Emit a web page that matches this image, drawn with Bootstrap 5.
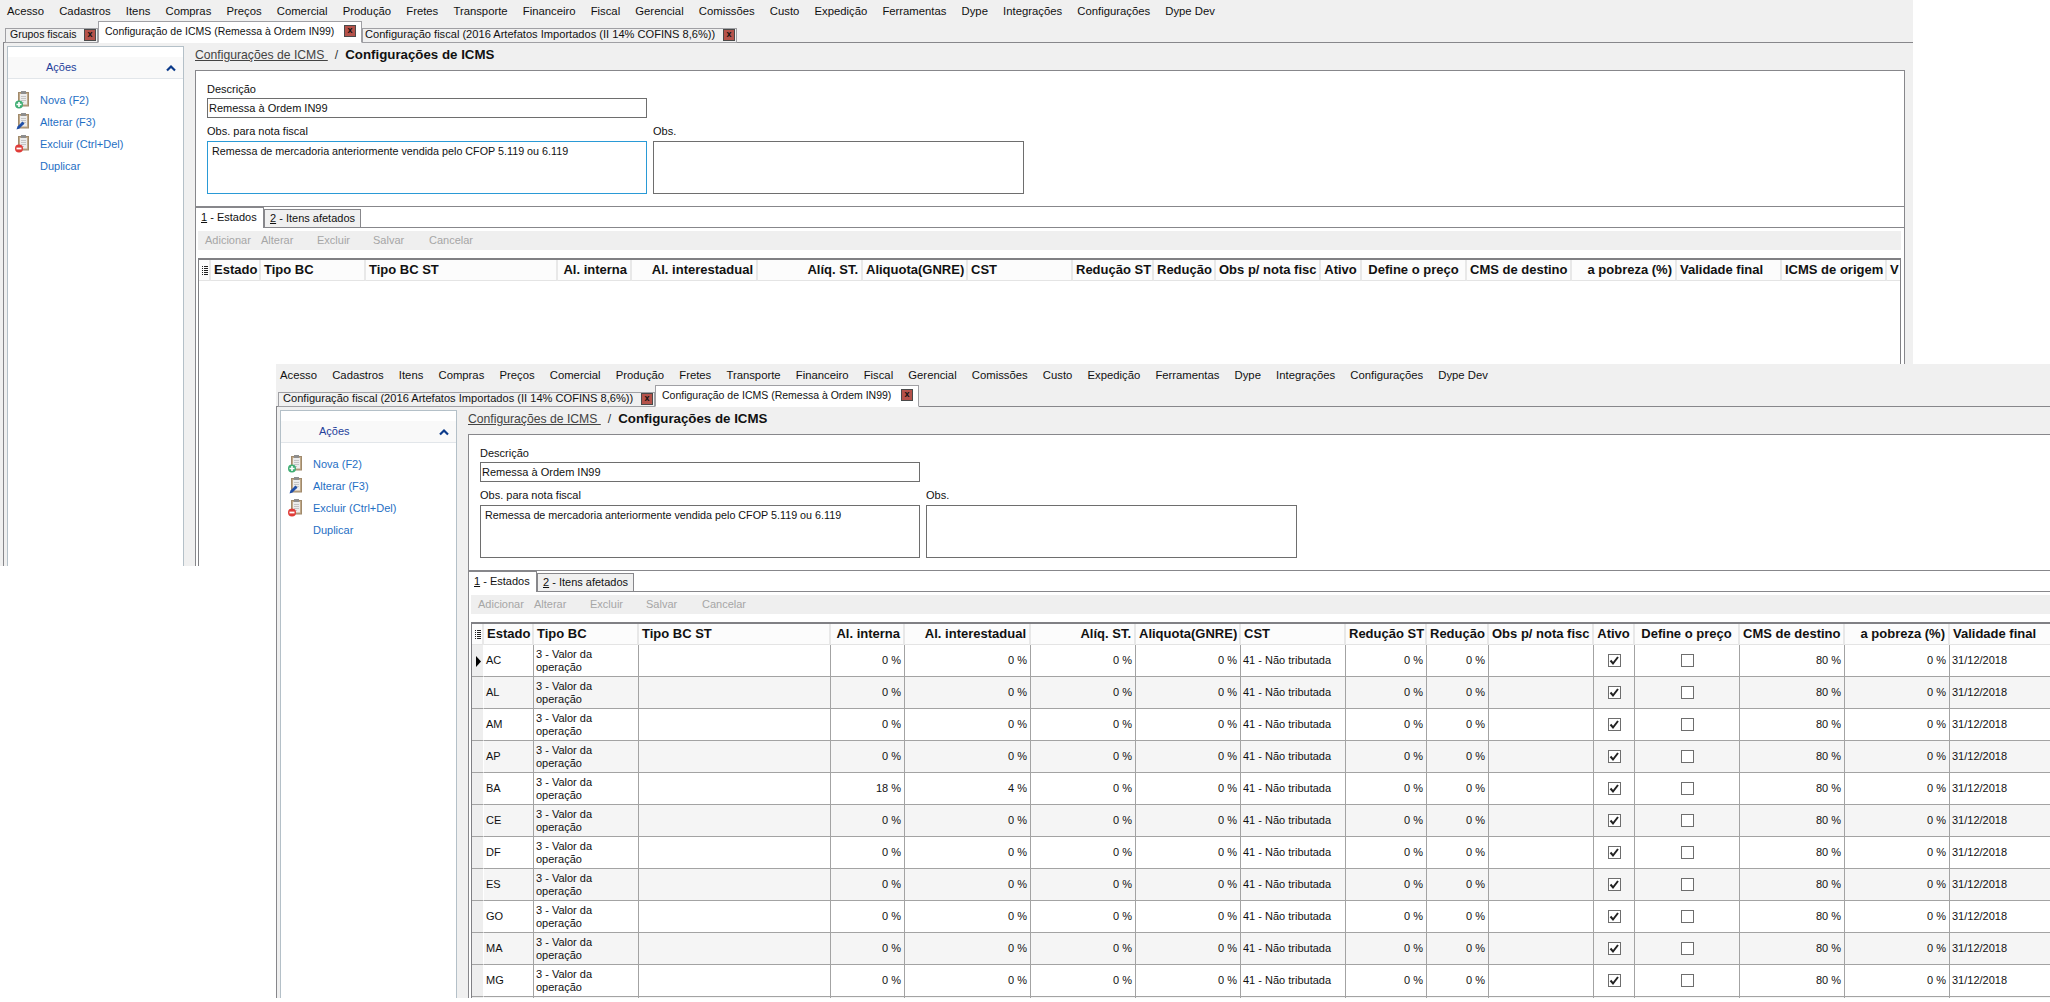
<!DOCTYPE html>
<html lang="pt-BR">
<head>
<meta charset="utf-8">
<title>Configurações de ICMS</title>
<link href="https://cdn.jsdelivr.net/npm/bootstrap@5.3.0/dist/css/bootstrap.min.css" rel="stylesheet">
<style>
body{margin:0;background:#fff;font:11px/13px "Liberation Sans",Arial,sans-serif;color:#111;overflow:hidden;height:1002px;--line:#87878b}
.appwin{position:absolute;background:#f0f0f0;overflow:hidden;display:flex;flex-direction:column}
.win-top{left:0;top:0;width:1913px;height:566px;padding-left:3px}
.win-low{left:276px;top:364px;width:1774px;height:634px}
.menubar{height:22px;flex:none;padding-left:4px;gap:15.15px;align-items:center;flex-wrap:nowrap}
.menubar .nav-link{padding:0;color:#111;font-size:11.3px;white-space:nowrap}
.tabstrip{height:21px;flex:none;padding-left:2px;border-bottom:1px solid var(--line);align-items:flex-end;flex-wrap:nowrap;position:relative}
.wintab{display:flex;align-items:center;height:15px;margin-bottom:-1px;padding:0 1px 2px 4px;border:1px solid #a0a0a4;border-top-color:#a0a0a4;background:#f0f0f0;color:#111;white-space:nowrap;justify-content:space-between;font-size:10.5px}
.wintab.is-on{height:22px;background:#fff;border-bottom-color:#fff;position:relative;padding:0 5px 2px 6px}
.wt-a{width:93px}.wt-b{width:264px}.wt-c{width:375px;font-size:11.1px}
.wt-b + .wt-c{padding-left:2px}
.win-low .wt-c{width:377px}
.closer{width:12px;height:12px;flex:none;background:#b5524a;border:1px solid #4a4a4a;font:700 9px/9px "Liberation Sans",sans-serif;text-align:center;color:#111}
.workbody{flex:1 1 auto;min-height:0;display:flex;border-left:1px solid var(--line)}
.sidepane{flex:none;width:177px;margin:3px 11px 0 3px;background:#fff;border:1px solid #b4c0c8;border-width:1px 1px 0 1px}
.sidehead{margin-top:10px;height:22px;background:#f9f9f9;border-bottom:1px solid #e2e6ea;padding:0 7px 0 38px;color:#24409a;align-items:center;justify-content:space-between;display:flex}
.sidelist{padding-top:10px}
.sidelist .list-group-item{height:22px;padding:0 0 0 7px;border:0;background:transparent;display:flex;align-items:center;color:#1f6fc4;gap:9px}
.sideico{width:16px;height:18px;flex:none}
.maincol{flex:none;width:1710px;display:flex;flex-direction:column}
.crumbs{height:27px;flex:none;margin:0;padding:5px 0 0;font-size:12.2px;line-height:14px;--bs-breadcrumb-margin-bottom:0;--bs-breadcrumb-item-padding-x:7px;--bs-breadcrumb-divider-color:#333;--bs-breadcrumb-item-active-color:#111;display:flex;flex-wrap:nowrap}
.crumbs a{color:#444;text-decoration:underline}
.crumbs b{font-size:13.3px;color:#111}
.formbox{height:137px;flex:none;background:#fff;border:1px solid var(--line);padding:12px 0 0 11px}
.fieldlab{display:block;margin:0;height:16px;line-height:13px}
.fieldlab-top{height:15px}
.fx{border:1px solid #6e6e6e;border-radius:0;padding:0 1px;font-size:11px;line-height:18px;height:20px;min-height:0;color:#111;box-shadow:none}
.fx-name{width:440px}
.fx-a{width:440px;height:53px;padding:3px 4px;line-height:13px;font-size:10.75px;border-color:#2a9ad6;resize:none}
.fx-plain{border-color:#6e6e6e}
.fx-b{width:371px;height:53px;resize:none}
.rowtwo{margin-top:7px;gap:6px;display:flex}
.tabctl{flex:1 1 auto;min-height:0;display:flex;flex-direction:column;background:#fff;border:1px solid var(--line);border-width:0 1px;margin-top:0}
.subtabs{height:21px;flex:none;border-bottom:1px solid var(--line);align-items:flex-end;flex-wrap:nowrap;padding-left:0}
.subtab{height:19px;width:97px;border:1px solid #87878b;background:#f0f0f0;padding:2px 0 0 5px;margin-bottom:-1px;color:#111;white-space:nowrap;margin-left:0}
.subtab.is-on{height:22px;width:68px;background:#fff;border:0;border-top:2px solid #87878b;border-right:1px solid #87878b;padding:3px 0 0 5px;border-bottom:0;position:relative}
.toolstrip{margin:3px 3px 0 2px;height:19px;flex:none;background:#efefef;display:flex;flex-wrap:nowrap}
.toolstrip .btn{width:56px;flex:none;border:0;border-radius:0;padding:0 0 0 7px;text-align:left;font-size:11px;line-height:19px;color:#a6a6a6;opacity:1;background:transparent}
.gridwrap{flex:1 1 auto;min-height:0;margin:8px 3px 0 2px;border:1px solid #808084;border-width:2px 1px 0 1px;overflow:hidden;background:#fff}
.gridtb{table-layout:fixed;width:1793px;margin:0;border-collapse:separate;border-spacing:0;color:#111;font-size:11px}
.win-low .gridtb{width:1583px}
.gridtb col:nth-child(1){width:12px}.gridtb col:nth-child(2){width:50px}.gridtb col:nth-child(3){width:105px}.gridtb col:nth-child(4){width:192px}.gridtb col:nth-child(5){width:74px}.gridtb col:nth-child(6){width:126px}.gridtb col:nth-child(10){width:81px}.gridtb col:nth-child(11){width:62px}.gridtb col:nth-child(13){width:41px}
.gridtb col{width:105px}
.gridtb>:not(caption)>*>*{padding:0 2px;border:0;border-right:1px solid #a3a3a3;border-bottom:1px solid #a3a3a3;height:32px;line-height:13px;vertical-align:middle;box-shadow:none;overflow:hidden;white-space:nowrap;background:transparent}
.gridtb>thead>tr>th{height:21px;font:700 13px/16px "Liberation Sans",sans-serif;background:#fcfcfc;border-right:2px solid #e8e8e8;border-bottom:1px solid #e4e4e4;padding:0 3px}
.gridtb>tbody>tr:nth-child(even)>td{background:#f5f5f5}
.gridtb>tbody>tr>td.rowmark{background:#eee;padding:0 0 0 4px;border-right:1px solid #fff;border-bottom:1px solid #a3a3a3}
.gridtb .ar{text-align:right;padding-right:3px}
.gridtb .ac{text-align:center}
.gridtb .form-check-input{width:13px;height:13px;margin:0;border:1px solid #6e6e6e;border-radius:0;background-color:#fff;vertical-align:middle;box-shadow:none}
.gridtb .form-check-input:checked{background-color:#fff;border-color:#6e6e6e;background-image:url("data:image/svg+xml,%3Csvg xmlns='http://www.w3.org/2000/svg' viewBox='0 0 13 13'%3E%3Cpath d='M2.5 6.5l2.5 3 5-6.5' fill='none' stroke='%23222' stroke-width='2'/%3E%3C/svg%3E");background-size:13px 13px}
.hide-sprite{display:none}
</style>
</head>
<body>
<svg class="hide-sprite" xmlns="http://www.w3.org/2000/svg">
<symbol id="clip" viewBox="0 0 16 18"><rect x="3.5" y="1.5" width="10" height="13.5" fill="#bfa888" stroke="#a08a6c"/><rect x="5" y="3" width="7" height="10.5" fill="#ececec"/><rect x="6" y="0" width="5" height="3" fill="#8e8e8e"/><path d="M6 5.5h5M6 7.5h5M6 9.5h5M6 11.5h3" stroke="#c4c4c4"/></symbol>
<symbol id="ic-add" viewBox="0 0 16 18"><use href="#clip"/><circle cx="4" cy="13.5" r="4" fill="#3fae74"/><path d="M4 11v5M1.5 13.5h5" stroke="#fff" stroke-width="1.6"/></symbol>
<symbol id="ic-edit" viewBox="0 0 16 18"><use href="#clip"/><path d="M1.5 16.5l1-3 5-5 2 2-5 5z" fill="#1f4fa8"/></symbol>
<symbol id="ic-del" viewBox="0 0 16 18"><use href="#clip"/><circle cx="4" cy="13.5" r="4" fill="#e03c38"/><path d="M1.5 13.5h5" stroke="#fff" stroke-width="1.8"/></symbol>
<symbol id="ic-up" viewBox="0 0 10 10"><path d="M1 7.5l4-4 4 4" fill="none" stroke="#0b3a8a" stroke-width="2.2"/></symbol>
<symbol id="ic-cols" viewBox="0 0 6 9"><path d="M0 .5h1M2 .5h4M0 2.5h1M2 2.5h4M0 4.5h1M2 4.5h4M0 6.5h1M2 6.5h4M0 8.5h1M2 8.5h4" stroke="#222"/></symbol>
<symbol id="ic-arrow" viewBox="0 0 5 11"><path d="M0 0l5 5.5-5 5.5z" fill="#000"/></symbol>
</svg>

<div class="appwin win-top">
  <nav class="nav menubar">
    <a class="nav-link" href="#">Acesso</a><a class="nav-link" href="#">Cadastros</a><a class="nav-link" href="#">Itens</a><a class="nav-link" href="#">Compras</a><a class="nav-link" href="#">Preços</a><a class="nav-link" href="#">Comercial</a><a class="nav-link" href="#">Produção</a><a class="nav-link" href="#">Fretes</a><a class="nav-link" href="#">Transporte</a><a class="nav-link" href="#">Financeiro</a><a class="nav-link" href="#">Fiscal</a><a class="nav-link" href="#">Gerencial</a><a class="nav-link" href="#">Comissões</a><a class="nav-link" href="#">Custo</a><a class="nav-link" href="#">Expedição</a><a class="nav-link" href="#">Ferramentas</a><a class="nav-link" href="#">Dype</a><a class="nav-link" href="#">Integrações</a><a class="nav-link" href="#">Configurações</a><a class="nav-link" href="#">Dype Dev</a>
  </nav>
  <div class="nav tabstrip">
    <div class="wintab wt-a"><span>Grupos fiscais</span><span class="closer">x</span></div>
    <div class="wintab wt-b is-on"><span>Configuração de ICMS (Remessa à Ordem IN99)</span><span class="closer">x</span></div>
    <div class="wintab wt-c"><span>Configuração fiscal (2016 Artefatos Importados (II 14% COFINS 8,6%))</span><span class="closer">x</span></div>
  </div>
  <div class="workbody">
    <aside class="sidepane">
      <div class="sidehead"><span>Ações</span><svg width="10" height="10"><use href="#ic-up"/></svg></div>
      <div class="list-group list-group-flush sidelist">
        <a class="list-group-item" href="#"><svg class="sideico"><use href="#ic-add"/></svg>Nova (F2)</a>
        <a class="list-group-item" href="#"><svg class="sideico"><use href="#ic-edit"/></svg>Alterar (F3)</a>
        <a class="list-group-item" href="#"><svg class="sideico"><use href="#ic-del"/></svg>Excluir (Ctrl+Del)</a>
        <a class="list-group-item" href="#"><span class="sideico"></span>Duplicar</a>
      </div>
    </aside>
    <main class="maincol">
      <ol class="breadcrumb crumbs"><li class="breadcrumb-item"><a href="#">Configurações de ICMS&nbsp;</a></li><li class="breadcrumb-item active"><b>Configurações de ICMS</b></li></ol>
      <div class="formbox">
        <label class="fieldlab fieldlab-top">Descrição</label>
        <input class="form-control fx fx-name" value="Remessa à Ordem IN99">
        <div class="rowtwo">
          <div><label class="fieldlab">Obs. para nota fiscal</label><textarea class="form-control fx fx-a">Remessa de mercadoria anteriormente vendida pelo CFOP 5.119 ou 6.119</textarea></div>
          <div><label class="fieldlab">Obs.</label><textarea class="form-control fx fx-b"></textarea></div>
        </div>
      </div>
      <div class="tabctl">
        <div class="nav subtabs">
          <div class="subtab is-on"><u>1</u> - Estados</div>
          <div class="subtab"><u>2</u> - Itens afetados</div>
        </div>
        <div class="toolstrip"><button class="btn" disabled>Adicionar</button><button class="btn" disabled>Alterar</button><button class="btn" disabled>Excluir</button><button class="btn" disabled>Salvar</button><button class="btn" disabled>Cancelar</button></div>
        <div class="gridwrap">
          <table class="table gridtb">
            <colgroup><col><col><col><col><col><col><col><col><col><col><col><col><col><col><col><col><col><col><col></colgroup>
            <thead><tr><th><svg width="6" height="9"><use href="#ic-cols"/></svg></th><th>Estado</th><th>Tipo BC</th><th>Tipo BC ST</th><th class="ar">Al. interna</th><th class="ar">Al. interestadual</th><th class="ar">Alíq. ST.</th><th class="ar">Aliquota(GNRE)</th><th>CST</th><th class="ar">Redução ST</th><th class="ar">Redução</th><th>Obs p/ nota fisc</th><th class="ac">Ativo</th><th class="ac">Define o preço</th><th class="ar">CMS de destino</th><th class="ar">a pobreza (%)</th><th>Validade final</th><th>ICMS de origem</th><th>V</th></tr></thead>
          </table>
        </div>
      </div>
    </main>
  </div>
</div>

<div class="appwin win-low">
  <nav class="nav menubar">
    <a class="nav-link" href="#">Acesso</a><a class="nav-link" href="#">Cadastros</a><a class="nav-link" href="#">Itens</a><a class="nav-link" href="#">Compras</a><a class="nav-link" href="#">Preços</a><a class="nav-link" href="#">Comercial</a><a class="nav-link" href="#">Produção</a><a class="nav-link" href="#">Fretes</a><a class="nav-link" href="#">Transporte</a><a class="nav-link" href="#">Financeiro</a><a class="nav-link" href="#">Fiscal</a><a class="nav-link" href="#">Gerencial</a><a class="nav-link" href="#">Comissões</a><a class="nav-link" href="#">Custo</a><a class="nav-link" href="#">Expedição</a><a class="nav-link" href="#">Ferramentas</a><a class="nav-link" href="#">Dype</a><a class="nav-link" href="#">Integrações</a><a class="nav-link" href="#">Configurações</a><a class="nav-link" href="#">Dype Dev</a>
  </nav>
  <div class="nav tabstrip">
    <div class="wintab wt-c"><span>Configuração fiscal (2016 Artefatos Importados (II 14% COFINS 8,6%))</span><span class="closer">x</span></div>
    <div class="wintab wt-b is-on"><span>Configuração de ICMS (Remessa à Ordem IN99)</span><span class="closer">x</span></div>
  </div>
  <div class="workbody">
    <aside class="sidepane">
      <div class="sidehead"><span>Ações</span><svg width="10" height="10"><use href="#ic-up"/></svg></div>
      <div class="list-group list-group-flush sidelist">
        <a class="list-group-item" href="#"><svg class="sideico"><use href="#ic-add"/></svg>Nova (F2)</a>
        <a class="list-group-item" href="#"><svg class="sideico"><use href="#ic-edit"/></svg>Alterar (F3)</a>
        <a class="list-group-item" href="#"><svg class="sideico"><use href="#ic-del"/></svg>Excluir (Ctrl+Del)</a>
        <a class="list-group-item" href="#"><span class="sideico"></span>Duplicar</a>
      </div>
    </aside>
    <main class="maincol">
      <ol class="breadcrumb crumbs"><li class="breadcrumb-item"><a href="#">Configurações de ICMS&nbsp;</a></li><li class="breadcrumb-item active"><b>Configurações de ICMS</b></li></ol>
      <div class="formbox">
        <label class="fieldlab fieldlab-top">Descrição</label>
        <input class="form-control fx fx-name" value="Remessa à Ordem IN99">
        <div class="rowtwo">
          <div><label class="fieldlab">Obs. para nota fiscal</label><textarea class="form-control fx fx-a fx-plain">Remessa de mercadoria anteriormente vendida pelo CFOP 5.119 ou 6.119</textarea></div>
          <div><label class="fieldlab">Obs.</label><textarea class="form-control fx fx-b"></textarea></div>
        </div>
      </div>
      <div class="tabctl">
        <div class="nav subtabs">
          <div class="subtab is-on"><u>1</u> - Estados</div>
          <div class="subtab"><u>2</u> - Itens afetados</div>
        </div>
        <div class="toolstrip"><button class="btn" disabled>Adicionar</button><button class="btn" disabled>Alterar</button><button class="btn" disabled>Excluir</button><button class="btn" disabled>Salvar</button><button class="btn" disabled>Cancelar</button></div>
        <div class="gridwrap">
          <table class="table gridtb">
            <colgroup><col><col><col><col><col><col><col><col><col><col><col><col><col><col><col><col><col></colgroup>
            <thead><tr><th><svg width="6" height="9"><use href="#ic-cols"/></svg></th><th>Estado</th><th>Tipo BC</th><th>Tipo BC ST</th><th class="ar">Al. interna</th><th class="ar">Al. interestadual</th><th class="ar">Alíq. ST.</th><th class="ar">Aliquota(GNRE)</th><th>CST</th><th class="ar">Redução ST</th><th class="ar">Redução</th><th>Obs p/ nota fisc</th><th class="ac">Ativo</th><th class="ac">Define o preço</th><th class="ar">CMS de destino</th><th class="ar">a pobreza (%)</th><th>Validade final</th></tr></thead>
            <tbody>
<tr><td class="rowmark"><svg width="5" height="11"><use href="#ic-arrow"/></svg></td><td>AC</td><td>3 - Valor da<br>operação</td><td></td><td class="ar">0 %</td><td class="ar">0 %</td><td class="ar">0 %</td><td class="ar">0 %</td><td>41 - Não tributada</td><td class="ar">0 %</td><td class="ar">0 %</td><td></td><td class="ac"><input class="form-check-input" type="checkbox" checked></td><td class="ac"><input class="form-check-input" type="checkbox"></td><td class="ar">80 %</td><td class="ar">0 %</td><td>31/12/2018</td></tr>
<tr><td class="rowmark"></td><td>AL</td><td>3 - Valor da<br>operação</td><td></td><td class="ar">0 %</td><td class="ar">0 %</td><td class="ar">0 %</td><td class="ar">0 %</td><td>41 - Não tributada</td><td class="ar">0 %</td><td class="ar">0 %</td><td></td><td class="ac"><input class="form-check-input" type="checkbox" checked></td><td class="ac"><input class="form-check-input" type="checkbox"></td><td class="ar">80 %</td><td class="ar">0 %</td><td>31/12/2018</td></tr>
<tr><td class="rowmark"></td><td>AM</td><td>3 - Valor da<br>operação</td><td></td><td class="ar">0 %</td><td class="ar">0 %</td><td class="ar">0 %</td><td class="ar">0 %</td><td>41 - Não tributada</td><td class="ar">0 %</td><td class="ar">0 %</td><td></td><td class="ac"><input class="form-check-input" type="checkbox" checked></td><td class="ac"><input class="form-check-input" type="checkbox"></td><td class="ar">80 %</td><td class="ar">0 %</td><td>31/12/2018</td></tr>
<tr><td class="rowmark"></td><td>AP</td><td>3 - Valor da<br>operação</td><td></td><td class="ar">0 %</td><td class="ar">0 %</td><td class="ar">0 %</td><td class="ar">0 %</td><td>41 - Não tributada</td><td class="ar">0 %</td><td class="ar">0 %</td><td></td><td class="ac"><input class="form-check-input" type="checkbox" checked></td><td class="ac"><input class="form-check-input" type="checkbox"></td><td class="ar">80 %</td><td class="ar">0 %</td><td>31/12/2018</td></tr>
<tr><td class="rowmark"></td><td>BA</td><td>3 - Valor da<br>operação</td><td></td><td class="ar">18 %</td><td class="ar">4 %</td><td class="ar">0 %</td><td class="ar">0 %</td><td>41 - Não tributada</td><td class="ar">0 %</td><td class="ar">0 %</td><td></td><td class="ac"><input class="form-check-input" type="checkbox" checked></td><td class="ac"><input class="form-check-input" type="checkbox"></td><td class="ar">80 %</td><td class="ar">0 %</td><td>31/12/2018</td></tr>
<tr><td class="rowmark"></td><td>CE</td><td>3 - Valor da<br>operação</td><td></td><td class="ar">0 %</td><td class="ar">0 %</td><td class="ar">0 %</td><td class="ar">0 %</td><td>41 - Não tributada</td><td class="ar">0 %</td><td class="ar">0 %</td><td></td><td class="ac"><input class="form-check-input" type="checkbox" checked></td><td class="ac"><input class="form-check-input" type="checkbox"></td><td class="ar">80 %</td><td class="ar">0 %</td><td>31/12/2018</td></tr>
<tr><td class="rowmark"></td><td>DF</td><td>3 - Valor da<br>operação</td><td></td><td class="ar">0 %</td><td class="ar">0 %</td><td class="ar">0 %</td><td class="ar">0 %</td><td>41 - Não tributada</td><td class="ar">0 %</td><td class="ar">0 %</td><td></td><td class="ac"><input class="form-check-input" type="checkbox" checked></td><td class="ac"><input class="form-check-input" type="checkbox"></td><td class="ar">80 %</td><td class="ar">0 %</td><td>31/12/2018</td></tr>
<tr><td class="rowmark"></td><td>ES</td><td>3 - Valor da<br>operação</td><td></td><td class="ar">0 %</td><td class="ar">0 %</td><td class="ar">0 %</td><td class="ar">0 %</td><td>41 - Não tributada</td><td class="ar">0 %</td><td class="ar">0 %</td><td></td><td class="ac"><input class="form-check-input" type="checkbox" checked></td><td class="ac"><input class="form-check-input" type="checkbox"></td><td class="ar">80 %</td><td class="ar">0 %</td><td>31/12/2018</td></tr>
<tr><td class="rowmark"></td><td>GO</td><td>3 - Valor da<br>operação</td><td></td><td class="ar">0 %</td><td class="ar">0 %</td><td class="ar">0 %</td><td class="ar">0 %</td><td>41 - Não tributada</td><td class="ar">0 %</td><td class="ar">0 %</td><td></td><td class="ac"><input class="form-check-input" type="checkbox" checked></td><td class="ac"><input class="form-check-input" type="checkbox"></td><td class="ar">80 %</td><td class="ar">0 %</td><td>31/12/2018</td></tr>
<tr><td class="rowmark"></td><td>MA</td><td>3 - Valor da<br>operação</td><td></td><td class="ar">0 %</td><td class="ar">0 %</td><td class="ar">0 %</td><td class="ar">0 %</td><td>41 - Não tributada</td><td class="ar">0 %</td><td class="ar">0 %</td><td></td><td class="ac"><input class="form-check-input" type="checkbox" checked></td><td class="ac"><input class="form-check-input" type="checkbox"></td><td class="ar">80 %</td><td class="ar">0 %</td><td>31/12/2018</td></tr>
<tr><td class="rowmark"></td><td>MG</td><td>3 - Valor da<br>operação</td><td></td><td class="ar">0 %</td><td class="ar">0 %</td><td class="ar">0 %</td><td class="ar">0 %</td><td>41 - Não tributada</td><td class="ar">0 %</td><td class="ar">0 %</td><td></td><td class="ac"><input class="form-check-input" type="checkbox" checked></td><td class="ac"><input class="form-check-input" type="checkbox"></td><td class="ar">80 %</td><td class="ar">0 %</td><td>31/12/2018</td></tr>
<tr><td class="rowmark"></td><td></td><td></td><td></td><td></td><td></td><td></td><td></td><td></td><td></td><td></td><td></td><td></td><td></td><td></td><td></td><td></td></tr>
            </tbody>
          </table>
        </div>
      </div>
    </main>
  </div>
</div>
<script src="https://cdn.jsdelivr.net/npm/bootstrap@5.3.0/dist/js/bootstrap.bundle.min.js"></script>
</body>
</html>
